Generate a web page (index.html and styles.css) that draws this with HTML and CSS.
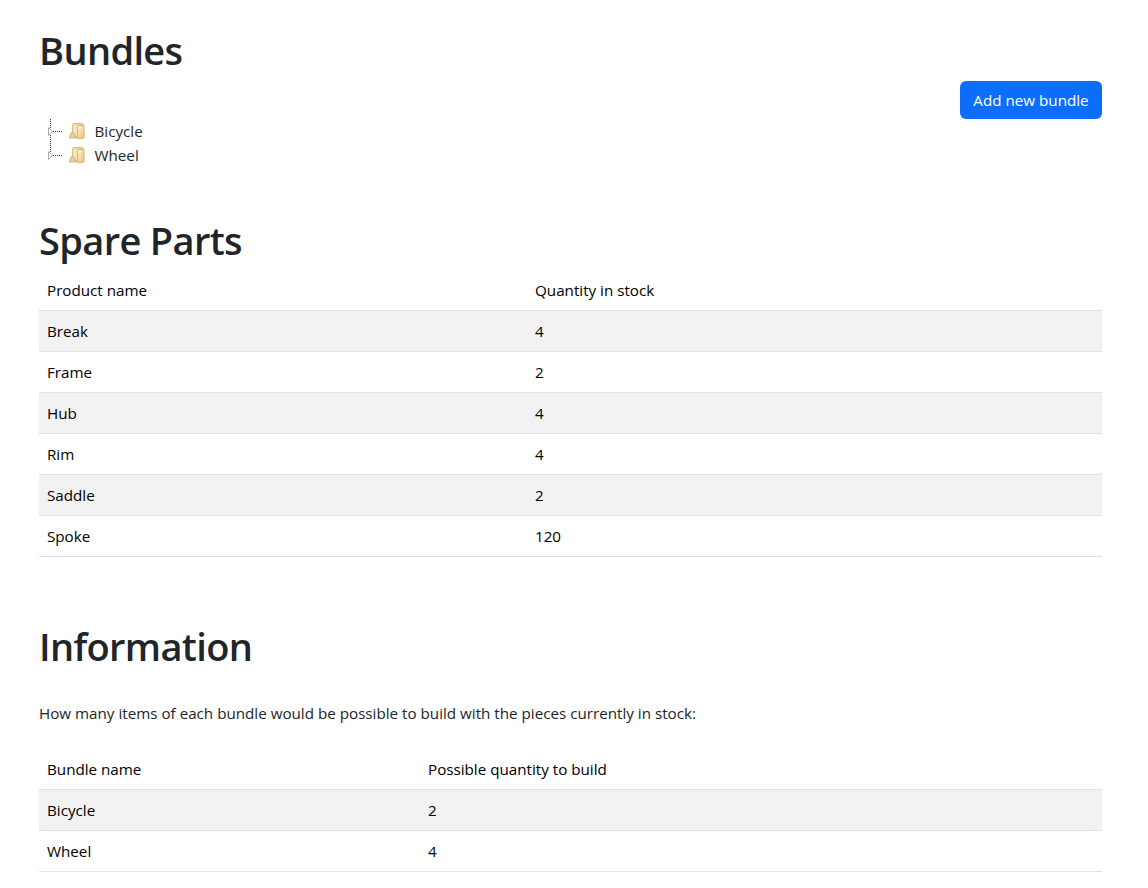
FILE: index.html
```html
<!DOCTYPE html>
<html lang="en">
<head>
<meta charset="utf-8">
<title>Bundles</title>
<link rel="stylesheet" href="styles.css">
</head>
<body>
<svg class="defs" width="0" height="0">
  <defs><linearGradient id="gold" x2="1" y2="1"><stop stop-color="#fffbe2"/><stop offset="1" stop-color="#e0c070"/></linearGradient></defs>
  <symbol id="folder" viewBox="0 0 16 16">
    <path d="M3.500 1.500l1-1H13.500l1 1V14H3.500z" fill="#ead89f" stroke="#cdb679" stroke-width=".8"/>
    <path d="M4 2h4v11H4z" fill="#f3e6b8"/>
    <path d="M8.500 3.500l1-1H15V14.500l-1 1H8.500z" fill="url(#gold)" stroke="#c9aa5e" stroke-width=".8"/>
    <path d="M2 9.500h3v2l2 1.500v2H.600v-2.500l1.400-1z" fill="#e6d194" stroke="#c0a767" stroke-width=".7"/>
  </symbol>
</svg>
<main class="page">
  <section class="bundles">
    <h1 class="title">Bundles</h1>
    <div class="bundle-row">
      <ul class="tree">
        <li class="node"><svg class="branch" width="30" height="24"><path class="dots" d="M11.500 0V24M14 12.500H24"/><path class="arrow" d="M9.500 8.500v8l4-4z"/></svg><svg class="folder" width="16" height="16"><use href="#folder"/></svg><span>Bicycle</span></li>
        <li class="node"><svg class="branch" width="30" height="24"><path class="dots" d="M11.500 0V12M14 12.500H24"/><path class="arrow" d="M9.500 8.500v8l4-4z"/></svg><svg class="folder" width="16" height="16"><use href="#folder"/></svg><span>Wheel</span></li>
      </ul>
      <button class="add">Add new bundle</button>
    </div>
  </section>
  <section class="parts">
    <h1 class="title">Spare Parts</h1>
    <table class="table">
      <colgroup><col class="part-name"><col></colgroup>
      <tr><td>Product name</td><td>Quantity in stock</td></tr>
      <tr><td>Break</td><td>4</td></tr>
      <tr><td>Frame</td><td>2</td></tr>
      <tr><td>Hub</td><td>4</td></tr>
      <tr><td>Rim</td><td>4</td></tr>
      <tr><td>Saddle</td><td>2</td></tr>
      <tr><td>Spoke</td><td>120</td></tr>
    </table>
  </section>
  <section class="info">
    <h1 class="title">Information</h1>
    <p class="lead">How many items of each bundle would be possible to build with the pieces currently in stock:</p>
    <table class="table">
      <colgroup><col class="bundle-name"><col></colgroup>
      <tr><td>Bundle name</td><td>Possible quantity to build</td></tr>
      <tr><td>Bicycle</td><td>2</td></tr>
      <tr><td>Wheel</td><td>4</td></tr>
    </table>
  </section>
</main>
</body>
</html>
```
FILE: styles.css
```css
* { box-sizing: border-box; }
body { margin: 0; background: #fff; color: #212529; font: 400 15.2px/24px "Open Sans", "Noto Sans", sans-serif; }
.page { width: 1063px; margin-left: 39px; padding-top: 27px; }
.title { margin: 0 0 10px; font-size: 38px; font-weight: 600; line-height: 46px; letter-spacing: -0.65px; }
.bundle-row { display: flex; justify-content: space-between; align-items: flex-start; margin-top: -2px; height: 136px; }
.tree { list-style: none; margin: 38px 0 0; padding: 0; }
.node { display: flex; height: 24px; }
.folder { margin: 4px 9.5px 0 0; }
.dots { stroke: #333; stroke-dasharray: 1 1; fill: none; }
.arrow { stroke: #aaa; fill: #fff; }
.add { height: 38px; width: 142px; border: 0; border-radius: 6px; background: #0d6efd; color: #fff; font: inherit; padding: 0; }
.table { width: 100%; border-collapse: separate; border-spacing: 0; table-layout: fixed; color: #000; margin-top: -3px; }
.part-name { width: 488px; }
.bundle-name { width: 381px; }
.table td { padding: 8px; border-bottom: 1px solid #dee2e6; height: 41px; }
.table tr:nth-child(even) { background: #f2f2f2; }
.info { margin-top: 66px; }
.lead { margin: 32px 0 27px; }
.defs { position: absolute; }
```
